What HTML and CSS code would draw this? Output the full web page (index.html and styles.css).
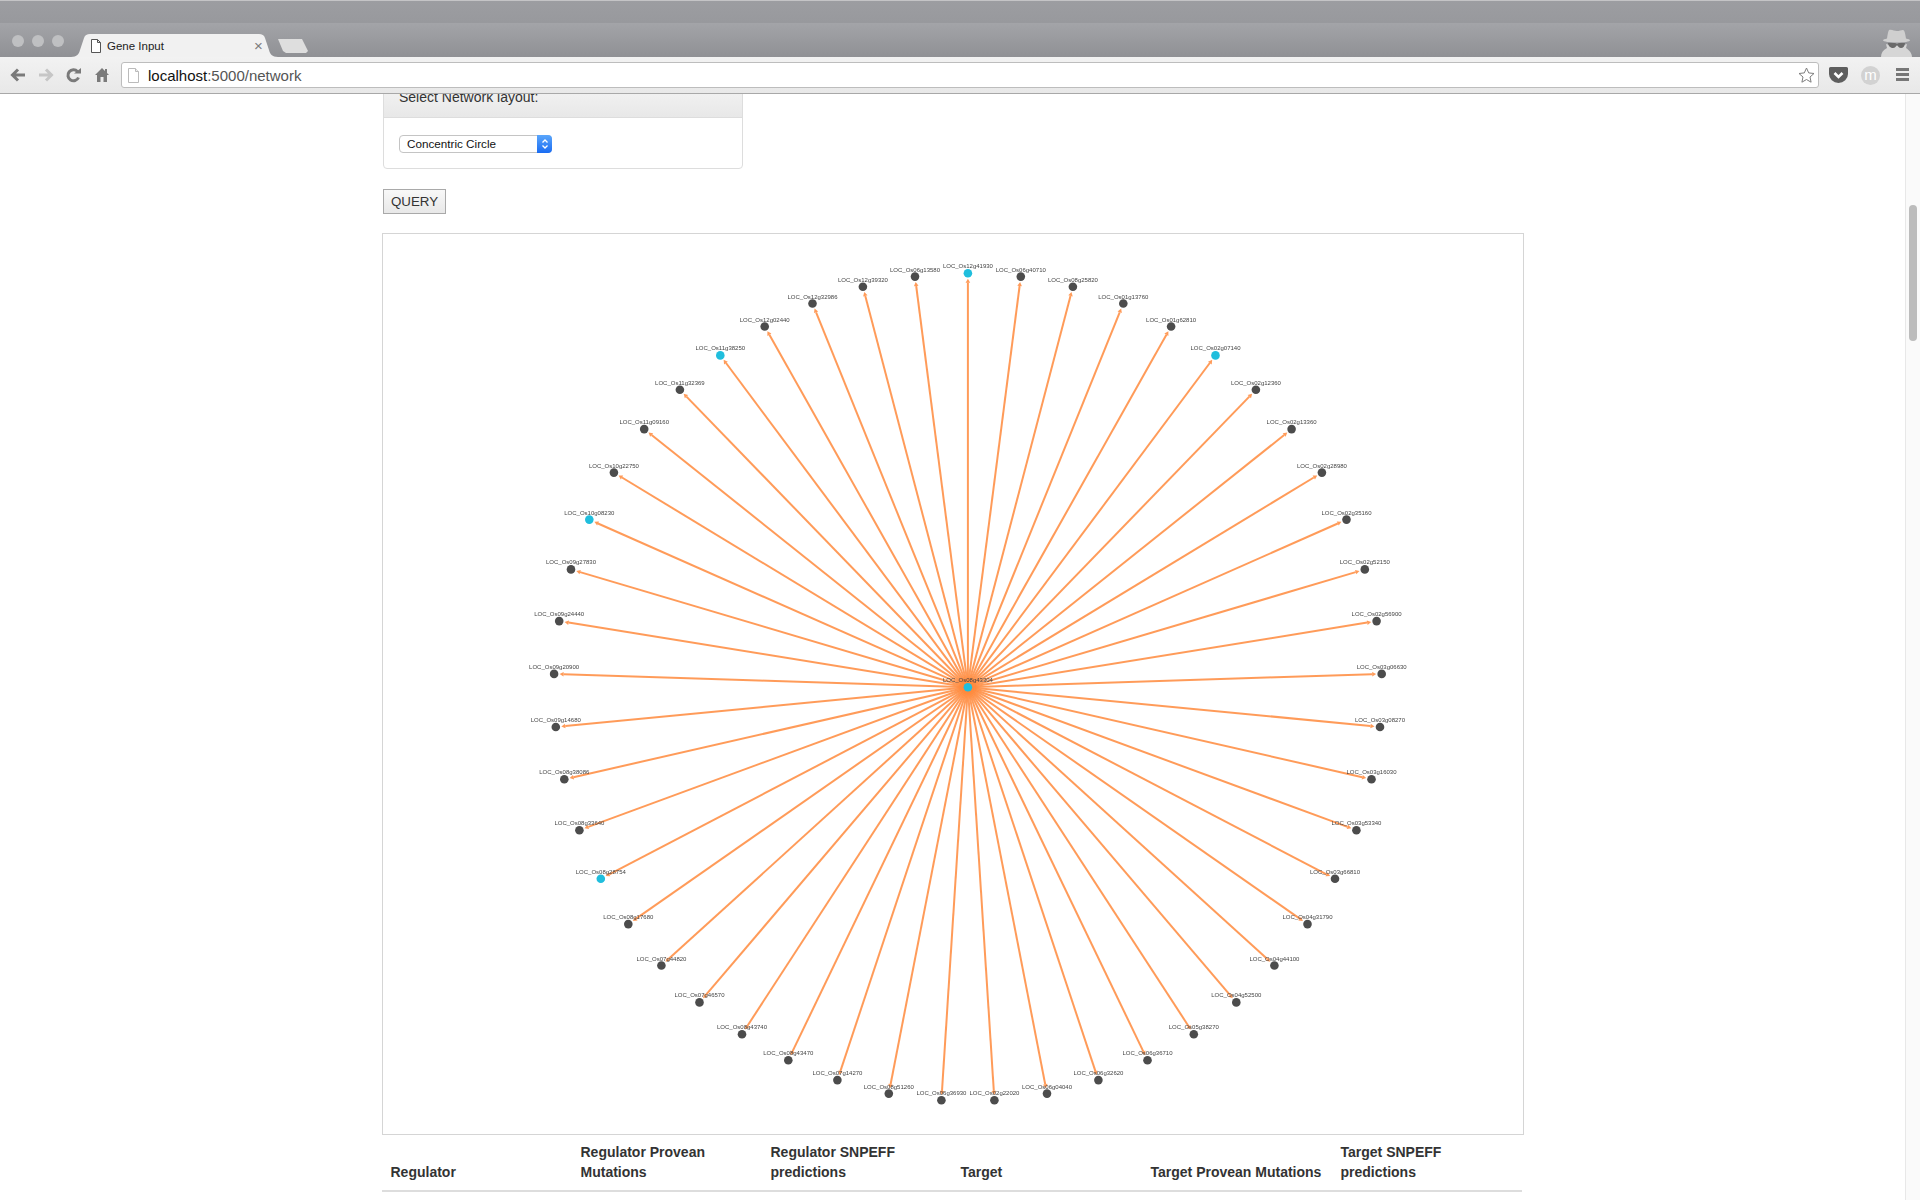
FILE: index.html
```html
<!DOCTYPE html>
<html lang="en">
<head>
    <meta charset="UTF-8">
    <title>Gene Input</title>
    <link rel="stylesheet" href="styles.css">
</head>
<body>

<div class="browser">
    <div class="tabstrip">
        <div class="lights"><i></i><i></i><i></i></div>
        <div class="tab">
            <svg class="tab-icon" width="10" height="14" viewBox="0 0 10 14"><path d="M.5.5h6l3 3v10h-9z M6.5.5v3h3" fill="#fff" stroke="#555" stroke-width="1"/></svg>
            <span class="tab-title">Gene Input</span>
            <span class="tab-close">×</span>
        </div>
        <div class="newtab"></div>
        <svg class="spy" width="33" height="28" viewBox="0 0 33 28">
            <path d="M9 1c3-1 5 1 8 1s6-2 7-.5c1 1.500 1.500 5 2 8 2 .5 4 1 4 2s-6 2-13 2-14-1-14-2 2-1.500 4-2c.5-3 1-7 2-8.500z" fill="#cfcfcf"/>
            <path d="M1 28c0-4 2-7 6-9l-1-4c7 2 15 2 21 0l-1 4c3 2 6 5 6 9z" fill="#d6d6d6"/>
            <path d="M8 14h7c1 0 1 1 2 1s1-1 2-1h6c0 3-2 5-4 5s-3-2-4-3c-1 1-2 3-4 3s-5-2-5-5z" fill="#6a6a6a"/>
        </svg>
    </div>
    <div class="toolbar">
        <svg class="nav-back" width="16" height="14" viewBox="0 0 16 14"><path d="M15 7H3M8 1.500 2.500 7 8 12.500" fill="none" stroke="#7a7a7a" stroke-width="3"/></svg>
        <svg class="nav-fwd" width="16" height="14" viewBox="0 0 16 14"><path d="M1 7h12M8 1.500 13.500 7 8 12.500" fill="none" stroke="#c6c6c6" stroke-width="3"/></svg>
        <svg class="nav-reload" width="15" height="15" viewBox="0 0 15 15"><path d="M12.500 9.500A5.500 5.500 0 1 1 11.500 3.500" fill="none" stroke="#7a7a7a" stroke-width="3"/><path d="M8 5.500h7V0z" fill="#7a7a7a"/></svg>
        <svg class="nav-home" width="14" height="14" viewBox="0 0 14 14"><path d="M7 0 0 7h2v7h3.500V9h3v5H12V7h2l-2-2V1h-2v2z" fill="#7a7a7a"/></svg>
        <div class="omnibox">
            <svg class="omni-icon" width="11" height="15" viewBox="0 0 11 15"><path d="M.5.5h7l3 3v11H.5z" fill="#fff" stroke="#bbb"/><path d="M7.500.5v3h3" fill="#eee" stroke="#bbb"/></svg>
            <span class="url"><b>localhost</b>:5000/network</span>
            <svg class="star" width="17" height="16" viewBox="0 0 17 16"><path d="M8.500 1l2.200 4.900 5.300.6-4 3.500 1.100 5.200-4.600-2.700-4.600 2.700 1.100-5.200-4-3.500 5.300-.6z" fill="#fff" stroke="#7d7d7d"/></svg>
        </div>
        <svg class="pocket" width="19" height="16" viewBox="0 0 19 16"><path d="M1.500 0h16A1.500 1.500 0 0 1 19 1.500V7a9.500 9 0 0 1-19 0V1.500A1.500 1.500 0 0 1 1.500 0z" fill="#5e5e5e"/><path d="M5.500 6 9.500 10l4-4" fill="none" stroke="#fff" stroke-width="2.600"/></svg>
        <div class="ext-m">m</div>
        <div class="menu"><i></i><i></i><i></i></div>
    </div>
</div>

<div class="window">
    <div class="viewport">
        <div class="container">
            <div class="panel">
                <div class="panel-heading">Select Network layout:</div>
                <div class="panel-body">
                    <div class="select">
                        <span class="select-text">Concentric Circle</span>
                        <span class="select-btn">
                            <svg width="8" height="12" viewBox="0 0 8 12"><path d="M1.500 4.500 4 2l2.500 2.500M1.500 7.500 4 10l2.500-2.500" fill="none" stroke="#fff" stroke-width="1.300"/></svg>
                        </span>
                    </div>
                </div>
            </div>

            <button class="query" type="button">QUERY</button>

            <div class="network-box">
                <svg id="network" class="network" width="1140" height="900" viewBox="0 0 1140 900"></svg>
            </div>

            <table class="results">
                <thead>
                    <tr>
                        <th>Regulator</th>
                        <th>Regulator Provean Mutations</th>
                        <th>Regulator SNPEFF predictions</th>
                        <th>Target</th>
                        <th>Target Provean Mutations</th>
                        <th>Target SNPEFF predictions</th>
                    </tr>
                </thead>
            </table>
        </div>
    </div>
    <div class="scrollbar"><div class="scroll-thumb"></div></div>
</div>

<script src="network.js"></script>
</body>
</html>
```

FILE: styles.css
```css
* {
    box-sizing: border-box;
}
html, body {
    margin: 0;
    height: 100%;
    overflow: hidden;
}
body {
    font-family: "Liberation Sans", Arial, sans-serif;
    font-size: 14px;
    color: #333;
    background-color: white;
    display: flex;
    flex-direction: column;
}

/* browser frame */
.browser {
    height: 94px;
    flex: none;
}
.tabstrip {
    height: 57px;
    display: flex;
    align-items: flex-end;
    background: linear-gradient(#9c9da1 0, #98999d 22px, #a3a4a8 22px, #8f9094 57px);
    border-top: 1px solid #c4c4c6;
}
.lights {
    display: flex;
    gap: 8px;
    margin: 0 0 10px 12px;
}
.lights i {
    display: block;
    width: 12px;
    height: 12px;
    border-radius: 50%;
    background-color: #bfc0c2;
}
.tab {
    width: 207px;
    height: 23px;
    margin-left: 7px;
    display: flex;
    align-items: center;
    padding: 0 12px 0 20px;
    background-color: #f1f1f1;
    clip-path: path('M0 23C6 23 8 20 9 16L13 4C14 1 16 0 19 0L188 0C191 0 193 1 194 4L198 16C199 20 201 23 207 23Z');
}
.tab-title {
    margin-left: 6px;
    font-size: 11.5px;
    color: #222;
    flex: 1;
}
.tab-close {
    font-size: 15px;
    color: #7c7c7c;
    width: 12px;
}
.newtab {
    width: 30px;
    height: 14px;
    margin: 0 0 4px 0;
    background-color: #dedede;
    clip-path: polygon(0 0, 24px 0, 30px 12px, 28px 14px, 8px 14px, 5px 12px);
}
.spy {
    margin-left: auto;
    margin-right: 7px;
}
.toolbar {
    height: 37px;
    display: flex;
    align-items: center;
    background: linear-gradient(#f2f2f2, #e8e8e8);
    border-bottom: 1px solid #a8a8a8;
    padding-left: 10px;
}
.nav-fwd {
    margin-left: 12px;
}
.nav-reload {
    margin-left: 12px;
}
.nav-home {
    margin-left: 14px;
}
.omnibox {
    width: 1698px;
    height: 26px;
    margin-left: 12px;
    display: flex;
    align-items: center;
    background-color: white;
    border: 1px solid #bdbdbd;
    border-radius: 3px;
    padding: 0 3px 0 6px;
}
.url {
    margin-left: 9px;
    font-size: 15px;
    color: #555;
    flex: 1;
}
.url b {
    font-weight: normal;
    color: #111;
}
.pocket {
    margin-left: 10px;
}
.ext-m {
    width: 19px;
    height: 19px;
    margin-left: 13px;
    border-radius: 50%;
    background-color: #d2d2d2;
    color: white;
    text-align: center;
    font-size: 15px;
    line-height: 17px;
}
.menu {
    width: 13px;
    margin-left: 16px;
}
.menu i {
    display: block;
    height: 3px;
    margin-bottom: 2px;
    background-color: #777;
}

/* page, scrolled a little down */
.window {
    flex: 1;
    display: flex;
    min-height: 0;
}
.viewport {
    flex: 1;
    overflow: hidden;
}
.container {
    width: 1142px;
    margin: -15px 0 0 382px;
}
.panel {
    width: 360px;
    margin-left: 1px;
    border: 1px solid #ddd;
    border-radius: 4px;
    margin-bottom: 20px;
}
.panel-heading {
    height: 38px;
    padding: 9px 15px;
    background: linear-gradient(#f5f5f5, #e8e8e8);
    border-bottom: 1px solid #ddd;
}
.panel-body {
    padding: 17px 15px 15px;
}
.select {
    width: 153px;
    height: 18px;
    display: flex;
    background-color: white;
    border: 1px solid #c4c4c4;
    border-radius: 4px;
    font-size: 11.7px;
    color: #111;
}
.select-text {
    flex: 1;
    padding-left: 7px;
    line-height: 16px;
}
.select-btn {
    width: 15px;
    margin: -1px -1px -1px 0;
    display: flex;
    align-items: center;
    justify-content: center;
    background: linear-gradient(#5aa6fb, #1a6cf2);
    border-radius: 0 4px 4px 0;
}
.query {
    display: block;
    width: 63px;
    height: 25px;
    padding: 0;
    margin: 0 0 19px 1px;
    font-family: "Liberation Sans", Arial, sans-serif;
    font-size: 13.33px;
    color: #333;
    background: linear-gradient(#f8f8f8, #e8e8e8);
    border: 1px solid #a9a9a9;
}
.network-box {
    height: 902px;
    border: 1px solid #d5d5d5;
}
.network {
    display: block;
    filter: blur(0.35px);
}
.node-label {
    font-family: "Liberation Sans", Arial, sans-serif;
    font-size: 6px;
    fill: #444;
}
.results {
    width: 1140px;
    table-layout: fixed;
    border-collapse: collapse;
}
.results th {
    padding: 7px 8px 8px 8.500px;
    text-align: left;
    vertical-align: bottom;
    line-height: 20px;
    border-bottom: 2px solid #ddd;
}

/* scrollbar */
.scrollbar {
    width: 15px;
    flex: none;
    background-color: #fafafa;
    border-left: 1px solid #e8e8e8;
}
.scroll-thumb {
    width: 8px;
    height: 136px;
    margin: 111px 0 0 3px;
    border-radius: 4px;
    background-color: #bcbcbc;
}
```

FILE: network.js
```js
// genes clockwise from the top, true = mutated (blue)
var genes = [
    ["LOC_Os12g41930", true], ["LOC_Os06g40710"], ["LOC_Os08g25820"], ["LOC_Os01g13760"],
    ["LOC_Os01g62810"], ["LOC_Os02g07140", true], ["LOC_Os02g12360"], ["LOC_Os02g13360"],
    ["LOC_Os02g28980"], ["LOC_Os02g35160"], ["LOC_Os02g52150"], ["LOC_Os02g56900"],
    ["LOC_Os03g06630"], ["LOC_Os03g08270"], ["LOC_Os03g16030"], ["LOC_Os03g53340"],
    ["LOC_Os03g66810"], ["LOC_Os04g31790"], ["LOC_Os04g44100"], ["LOC_Os04g52500"],
    ["LOC_Os05g38270"], ["LOC_Os06g36710"], ["LOC_Os06g32620"], ["LOC_Os06g04040"],
    ["LOC_Os02g22020"], ["LOC_Os06g36930"], ["LOC_Os08g51260"], ["LOC_Os07g14270"],
    ["LOC_Os08g43470"], ["LOC_Os08g43740"], ["LOC_Os07g46570"], ["LOC_Os07g44820"],
    ["LOC_Os08g17680"], ["LOC_Os08g28754", true], ["LOC_Os08g33640"], ["LOC_Os08g38086"],
    ["LOC_Os09g14680"], ["LOC_Os09g20900"], ["LOC_Os09g24440"], ["LOC_Os09g27830"],
    ["LOC_Os10g08230", true], ["LOC_Os10g22750"], ["LOC_Os11g09160"], ["LOC_Os11g32369"],
    ["LOC_Os11g38250", true], ["LOC_Os12g02440"], ["LOC_Os12g32986"], ["LOC_Os12g39320"],
    ["LOC_Os06g13580"]
];

var cx = 584.9, cy = 453.2, radius = 414;
var edges = "", nodes = "", labels = "";

function addNode(x, y, name, blue) {
    nodes += '<circle cx="' + x.toFixed(1) + '" cy="' + y.toFixed(1) + '" r="4.3" fill="' + (blue ? "#20bedd" : "#4c4c4c") + '"/>';
    labels += '<text class="node-label" text-anchor="middle" x="' + x.toFixed(1) + '" y="' + (y - 5).toFixed(1) + '">' + name + '</text>';
}

genes.forEach(function(gene, i) {
    var a = i / genes.length * 2 * Math.PI;
    var dx = Math.sin(a), dy = -Math.cos(a);
    var x = cx + radius * dx, y = cy + radius * dy;

    // arrow tip stops just short of the node
    var tipX = x - 5.5 * dx, tipY = y - 5.5 * dy;
    var baseX = x - 9.5 * dx, baseY = y - 9.5 * dy;
    edges += '<line x1="' + cx + '" y1="' + cy + '" x2="' + baseX.toFixed(1) + '" y2="' + baseY.toFixed(1) + '"/>';
    edges += '<polygon stroke="none" points="' + tipX.toFixed(1) + "," + tipY.toFixed(1) + " " +
        (baseX - 2.3 * dy).toFixed(1) + "," + (baseY + 2.3 * dx).toFixed(1) + " " +
        (baseX + 2.3 * dy).toFixed(1) + "," + (baseY - 2.3 * dx).toFixed(1) + '"/>';

    addNode(x, y, gene[0], gene[1]);
});

addNode(cx, cy, "LOC_Os08g43304", true);

document.getElementById("network").innerHTML =
    '<g stroke="#ff8a3c" stroke-width="2" fill="#ff8a3c" stroke-opacity="0.85" fill-opacity="0.85">' + edges + '</g>' + nodes + labels;
```
